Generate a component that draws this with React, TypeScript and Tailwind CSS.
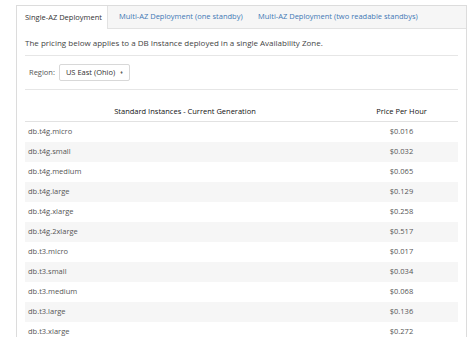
import React from "react";

const rows: [string, string][] = [
  ["db.t4g.micro", "$0.016"],
  ["db.t4g.small", "$0.032"],
  ["db.t4g.medium", "$0.065"],
  ["db.t4g.large", "$0.129"],
  ["db.t4g.xlarge", "$0.258"],
  ["db.t4g.2xlarge", "$0.517"],
  ["db.t3.micro", "$0.017"],
  ["db.t3.small", "$0.034"],
  ["db.t3.medium", "$0.068"],
  ["db.t3.large", "$0.136"],
  ["db.t3.xlarge", "$0.272"],
];

export default function App() {
  return (
    <div
      className="w-[474px] h-[337px] overflow-hidden bg-white pt-[5px] pl-[16px] pr-[7px]"
      style={{ fontFamily: '"Open Sans", "Noto Sans", sans-serif' }}
    >
      <div className="h-[340px] border border-[#dcdcdc] border-b-0 flex flex-col">
        <div className="flex h-[23px] bg-[#f6f6f6] border-b border-[#e2e2e2] text-[7.5px] whitespace-nowrap">
          <div className="bg-white h-[23px] w-[91px] shrink-0 pl-[8px] flex items-center text-[#333] border-r border-[#e2e2e2]">
            Single-AZ Deployment
          </div>
          <div className="w-[139px] shrink-0 pl-[11px] flex items-center text-[#3f78b5]">
            Multi-AZ Deployment (one standby)
          </div>
          <div className="pl-[11px] flex items-center text-[#3f78b5]">
            Multi-AZ Deployment (two readable standbys)
          </div>
        </div>
        <div className="px-[8px] text-[#444]">
          <div className="h-[27px] flex items-center pt-[2px] text-[8px] border-b border-[#e6e6e6] whitespace-nowrap">
            The pricing below applies to a DB Instance deployed in a single Availability Zone.
          </div>
          <div className="h-[34px] flex items-center border-b border-[#e6e6e6] text-[7.5px] whitespace-nowrap">
            <span className="ml-[4px] text-[#555]">Region:</span>
            <div className="ml-[4px] h-[17px] border border-[#d8d8d8] rounded-[2px] flex items-center pl-[6px] pr-[6px] text-[#333]">
              <span>US East (Ohio)</span>
              <span className="ml-[5px] text-[5px] text-[#666]">&#9830;</span>
            </div>
          </div>
          <div className="mt-[12px] flex h-[20px] items-center border-b border-[#e2e2e2] text-[7.5px] text-[#111] whitespace-nowrap">
            <div className="w-[320px] text-center">Standard Instances - Current Generation</div>
            <div className="flex-1 text-center">Price Per Hour</div>
          </div>
          {rows.map(([n, p], i) => (
            <div
              key={n}
              className={`flex h-[20px] items-center text-[7.5px] text-[#555] ${i % 2 === 1 ? "bg-[#f6f6f6]" : "bg-white"}`}
            >
              <div className="w-[320px] pl-[3px]">{n}</div>
              <div className="flex-1 text-center">{p}</div>
            </div>
          ))}
        </div>
      </div>
    </div>
  );
}
